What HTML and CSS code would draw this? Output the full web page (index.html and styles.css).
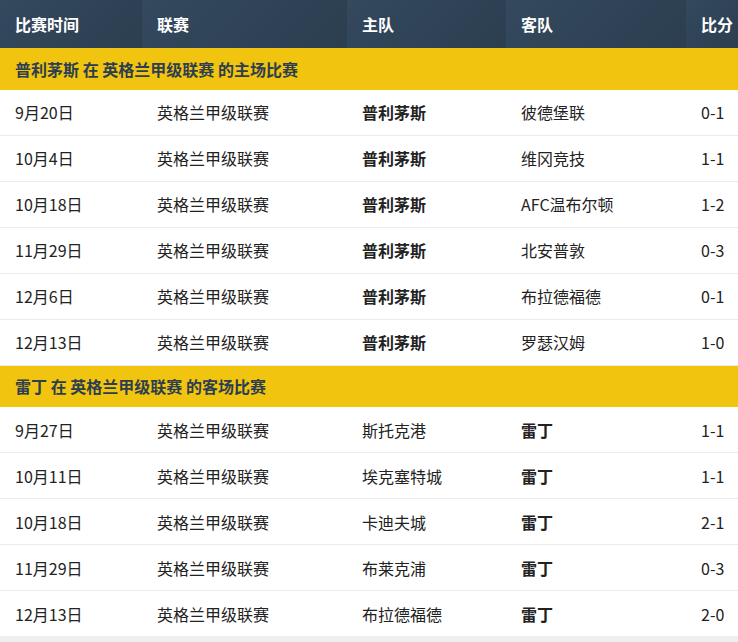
FILE: index.html
```html
<!DOCTYPE html>
<html lang="zh-CN">
<head>
<meta charset="utf-8">
<title>赛程</title>
<link rel="stylesheet" href="styles.css">
</head>
<body>
<div class="wrap">
<table class="matches">
  <colgroup>
    <col class="c-date"><col class="c-league"><col class="c-home"><col class="c-away"><col class="c-score">
  </colgroup>
  <thead>
    <tr><th>比赛时间</th><th>联赛</th><th>主队</th><th>客队</th><th>比分</th></tr>
  </thead>
  <tbody>
    <tr class="group"><td colspan="5">普利茅斯 在 英格兰甲级联赛 的主场比赛</td></tr>
    <tr><td>9月20日</td><td>英格兰甲级联赛</td><td class="strong">普利茅斯</td><td>彼德堡联</td><td>0-1</td></tr>
    <tr><td>10月4日</td><td>英格兰甲级联赛</td><td class="strong">普利茅斯</td><td>维冈竞技</td><td>1-1</td></tr>
    <tr><td>10月18日</td><td>英格兰甲级联赛</td><td class="strong">普利茅斯</td><td>AFC温布尔顿</td><td>1-2</td></tr>
    <tr><td>11月29日</td><td>英格兰甲级联赛</td><td class="strong">普利茅斯</td><td>北安普敦</td><td>0-3</td></tr>
    <tr><td>12月6日</td><td>英格兰甲级联赛</td><td class="strong">普利茅斯</td><td>布拉德福德</td><td>0-1</td></tr>
    <tr><td>12月13日</td><td>英格兰甲级联赛</td><td class="strong">普利茅斯</td><td>罗瑟汉姆</td><td>1-0</td></tr>
    <tr class="group"><td colspan="5">雷丁 在 英格兰甲级联赛 的客场比赛</td></tr>
    <tr><td>9月27日</td><td>英格兰甲级联赛</td><td>斯托克港</td><td class="strong">雷丁</td><td>1-1</td></tr>
    <tr><td>10月11日</td><td>英格兰甲级联赛</td><td>埃克塞特城</td><td class="strong">雷丁</td><td>1-1</td></tr>
    <tr><td>10月18日</td><td>英格兰甲级联赛</td><td>卡迪夫城</td><td class="strong">雷丁</td><td>2-1</td></tr>
    <tr><td>11月29日</td><td>英格兰甲级联赛</td><td>布莱克浦</td><td class="strong">雷丁</td><td>0-3</td></tr>
    <tr class="last"><td>12月13日</td><td>英格兰甲级联赛</td><td>布拉德福德</td><td class="strong">雷丁</td><td>2-0</td></tr>
  </tbody>
</table>
</div>
</body>
</html>
```
FILE: styles.css
```css
html, body {
  margin: 0;
  padding: 0;
  background: #eeeeee;
}
body {
  font-family: "Noto Sans CJK SC", "Noto Sans", sans-serif;
  font-size: 16px;
  color: #222;
}
.wrap {
  width: 738px;
  overflow: hidden;
}
.matches {
  width: 738px;
  table-layout: fixed;
  border-collapse: separate;
  border-spacing: 0;
  background: #ffffff;
}
.c-date { width: 142px; }
.c-league { width: 205px; }
.c-home { width: 159px; }
.c-away { width: 180px; }
.c-score { width: 52px; }

.matches th,
.matches td {
  box-sizing: border-box;
  padding: 0 0 0 15px;
  text-align: left;
  white-space: nowrap;
  overflow: hidden;
  line-height: 20px;
}
.matches th {
  height: 48px;
  color: #ffffff;
  font-weight: 700;
  background: linear-gradient(135deg, #34495e 0%, #2c3e50 100%);
}
.matches td {
  height: 46px;
  border-bottom: 1px solid #ebebeb;
}
.matches tr.last td {
  border-bottom: none;
  height: 45px;
}
.matches tr.group td {
  height: 41.5px;
  border-bottom: none;
  background: #f1c40f;
  color: #2c3e50;
  font-weight: 700;
}
.matches td.strong {
  font-weight: 700;
}
```
